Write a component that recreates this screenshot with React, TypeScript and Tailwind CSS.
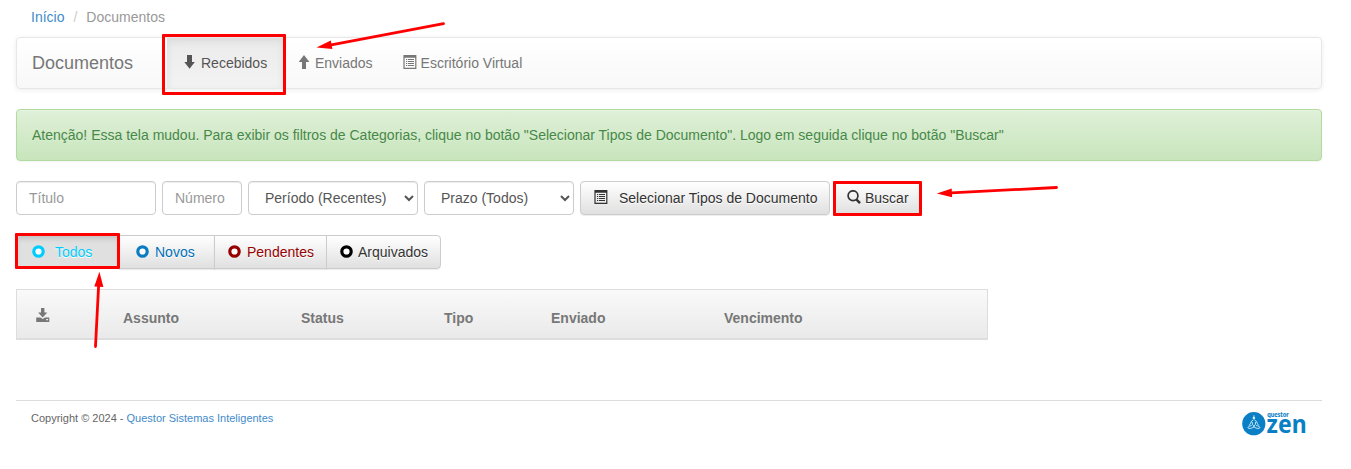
import React from "react";

type IconProps = { className?: string };

const ArrowDownIcon = ({ className = "" }: IconProps) => (
  <svg viewBox="0 0 14 14" width="14" height="14" fill="currentColor" className={`shrink-0 ${className}`}>
    <path d="M4 0h5v7h2.8L6.6 13.8 1.3 7H4z" />
  </svg>
);

const ArrowUpIcon = ({ className = "" }: IconProps) => (
  <svg viewBox="0 0 14 14" width="14" height="14" fill="currentColor" className={`shrink-0 ${className}`}>
    <path d="M5 13.9h4V7h3.4L7 0.1 1.7 7H5z" />
  </svg>
);

const ListIcon = ({ className = "" }: IconProps) => (
  <svg viewBox="0 0 14 14" width="14" height="14" fill="currentColor" className={`shrink-0 ${className}`}>
    <path fillRule="evenodd" d="M0.4 0h13v14h-13zM1.6 2.8v10h10.6v-10z" />
    <path d="M3 4h1.2v1H3zM5 4h6v1H5zM3 6h1.2v1H3zM5 6h6v1H5zM3 8h1.2v1H3zM5 8h6v1H5zM3 10h1.2v1H3zM5 10h6v1H5z" />
  </svg>
);

const SearchIcon = ({ className = "" }: IconProps) => (
  <svg viewBox="0 0 14 14" width="14" height="14" fill="none" stroke="currentColor" className={`shrink-0 ${className}`}>
    <circle cx="6" cy="5.7" r="4.9" strokeWidth="1.7" />
    <path d="M9.3 9.3l3.7 3.9" strokeWidth="2.4" />
  </svg>
);

const SaveIcon = ({ className = "" }: IconProps) => (
  <svg viewBox="0 0 14 14" width="14" height="14" fill="currentColor" className={`shrink-0 ${className}`}>
    <path d="M5 0h3.4v4.6h2.9L6.7 9.4 2.1 4.6H5z" />
    <path fillRule="evenodd" d="M0.2 9.6h4.2l2.3 1.5L9 9.6h4.3V14H0.2zM10.2 11v1.3h1.9V11z" />
  </svg>
);

const Ring = ({ className = "" }: IconProps) => (
  <svg viewBox="0 0 13 13" width="13" height="13" fill="#fff" stroke="currentColor" strokeWidth="3.2" className={`shrink-0 ${className}`}>
    <circle cx="6.5" cy="6.5" r="4.7" />
  </svg>
);

const Highlight = ({ className }: { className: string }) => (
  <span className={`pointer-events-none absolute z-10 rounded-[1px] border-3 border-[#ff0000] ${className}`} />
);

const ZenLogo = () => (
  <svg width="66" height="28" viewBox="0 0 66 28" className="block overflow-visible" aria-label="Questor Zen">
    <circle cx="11.8" cy="13.7" r="11.6" fill="#0b7fc5" />
    <g fill="#d7effb">
      <circle cx="11.9" cy="8" r="1.3" />
      <path d="M11.5 5.2h.8v2h-.8z" />
    </g>
    <g fill="none" stroke="#d7effb" strokeWidth="0.9" strokeLinecap="round" strokeLinejoin="round">
      <path d="M11 10c-1.9.5-2 3.2-3.5 5M12.8 10c1.9.5 2 3.2 3.5 5M10.2 12.4l.3 2.3 1.4 1.3 1.4-1.3.3-2.3" />
      <path d="M9.3 15.6c-3 .4-4.3 1.9-2.7 2.7 1.8.7 4.2-.6 5.7-1.6M14.5 15.6c3 .4 4.3 1.9 2.7 2.7-1.8.7-4.2-.6-5.7-1.6" />
    </g>
    <text x="25.2" y="7.3" textLength="21.5" lengthAdjust="spacingAndGlyphs" fontFamily="Lato, sans-serif" fontWeight="800" fontSize="6.6" fill="#1585ca">questor</text>
    <text x="24.6" y="23.3" textLength="40" lengthAdjust="spacingAndGlyphs" fontFamily="'Noto Sans', sans-serif" fontWeight="700" fontSize="25.5" fill="#0b7fc5">zen</text>
  </svg>
);

const button =
  "flex h-[34px] items-center border border-[#ccc] bg-linear-to-b from-white to-[#e0e0e0] text-[#333] shadow-[inset_0_1px_0_rgba(255,255,255,.15),0_1px_1px_rgba(0,0,0,.075)] [text-shadow:0_1px_0_#fff]";
const field =
  "h-[34px] rounded border border-[#ccc] bg-white px-3 text-sm text-[#555] shadow-[inset_0_1px_1px_rgba(0,0,0,.075)] outline-none placeholder:text-[#999]";

export default function App() {
  return (
    <div className="relative h-[469px] overflow-hidden bg-white pl-4 font-['Liberation_Sans',Arial,sans-serif] text-sm leading-5 text-[#333]">
      <div className="w-[1306px]">
        <nav className="flex h-[37px] gap-[9px] pt-[7px] pl-[15px] text-[#999]">
          <a className="text-[#428bca]">Início</a>
          <span className="text-[#ccc]">/</span>
          <span>Documentos</span>
        </nav>

        <header className="flex h-[52px] rounded border border-[#e7e7e7] bg-linear-to-b from-white to-[#f8f8f8] text-[#777] shadow-[inset_0_1px_0_rgba(255,255,255,.15),0_1px_5px_rgba(0,0,0,.075)] [text-shadow:0_1px_0_rgba(255,255,255,.25)]">
          <span className="w-[150px] py-[15px] pl-[15px] text-lg leading-5">Documentos</span>
          <a className="relative flex w-[116px] gap-1 bg-linear-to-b from-[#ebebeb] to-[#f3f3f3] py-[15px] pl-4 text-[#555] shadow-[inset_0_3px_9px_rgba(0,0,0,.075)]">
            <ArrowDownIcon className="mt-[2px]" />
            Recebidos
            <Highlight className="-top-[4px] -left-[5px] h-[61px] w-[124px]" />
          </a>
          <a className="flex gap-1 px-[14px] py-[15px]">
            <ArrowUpIcon className="mt-[2px]" />
            Enviados
          </a>
          <a className="flex gap-1 px-4 py-[15px]">
            <ListIcon className="mt-[2px]" />
            Escritório Virtual
          </a>
        </header>

        <div className="mt-5 h-[52px] rounded border border-[#b2dba1] bg-linear-to-b from-[#dff0d8] to-[#c8e5bc] p-[15px] text-[#468847] shadow-[inset_0_1px_0_rgba(255,255,255,.25),0_1px_2px_rgba(0,0,0,.05)] [text-shadow:0_1px_0_rgba(255,255,255,.2)]">
          Atenção! Essa tela mudou. Para exibir os filtros de Categorias, clique no botão "Selecionar Tipos de Documento". Logo em seguida clique no botão "Buscar"
        </div>

        <form className="mt-5 flex gap-1.5">
          <input placeholder="Título" className={`${field} w-[140px]`} />
          <input placeholder="Número" className={`${field} w-20`} />
          <select className={`${field} w-[170px] pr-0.5`}>
            <option>Período (Recentes)</option>
          </select>
          <select className={`${field} w-[150px] pr-0.5`}>
            <option>Prazo (Todos)</option>
          </select>
          <button type="button" className={`${button} w-[250px] rounded pl-[13px]`}>
            <ListIcon className="mr-[11px] -mt-[2px]" />
            Selecionar Tipos de Documento
          </button>
          <button type="button" className={`${button} relative -ml-0.5 w-[88px] rounded pl-3`}>
            <SearchIcon className="mr-1 -mt-[2px]" />
            Buscar
            <Highlight className="-top-px -left-[2px] h-[35px] w-[89px]" />
          </button>
        </form>

        <div className="mt-5 flex">
          <button type="button" className="relative flex h-[34px] w-[104px] items-center rounded-l border border-[#dbdbdb] bg-[#e0e0e0] pl-[15px] text-[#00cdff] shadow-[inset_0_3px_5px_rgba(0,0,0,.125)] [text-shadow:0_1px_0_#fff]">
            <Ring className="mr-[10px] -mt-px text-[#00cdff]" />
            Todos
            <Highlight className="-top-[3px] -left-[2px] h-[36px] w-[105px]" />
          </button>
          <button type="button" className={`${button} -ml-px w-24 pl-4`}>
            <Ring className="mr-[6px] -mt-px text-[#0b7cc1]" />
            <span className="text-[#0070b8]">Novos</span>
          </button>
          <button type="button" className={`${button} -ml-px w-[113px] pl-[13px]`}>
            <Ring className="mr-[6px] -mt-px text-[#960000]" />
            <span className="text-[#960000]">Pendentes</span>
          </button>
          <button type="button" className={`${button} -ml-px w-[115px] rounded-r pl-[13px]`}>
            <Ring className="mr-[5px] -mt-px text-black" />
            Arquivados
          </button>
        </div>

        <table className="mt-5 w-[972px] table-fixed border-separate border-spacing-0 text-left text-[#777]">
          <thead>
            <tr className="h-[51px] bg-linear-to-b from-[#fafafa] to-[#e9e9e9] [&>th]:border-t [&>th]:border-b-2 [&>th]:border-[#ddd] [&>th]:p-0 [&>th]:pt-2">
              <th className="w-[107px] border-l">
                <SaveIcon className="mt-[-6px] ml-[19px]" />
              </th>
              <th className="w-[178px]">Assunto</th>
              <th className="w-[143px]">Status</th>
              <th className="w-[107px]">Tipo</th>
              <th className="w-[173px]">Enviado</th>
              <th className="border-r">Vencimento</th>
            </tr>
          </thead>
        </table>

        <footer className="mt-[60px] flex justify-between border-t border-[#ddd] pt-[7px] pr-[14px] pl-[15px] text-[11px] leading-5 text-[#666]">
          <p>
            Copyright © 2024 - <a className="text-[#428bca]">Questor Sistemas Inteligentes</a>
          </p>
          <div className="pt-0.5">
            <ZenLogo />
          </div>
        </footer>
      </div>

      <svg className="pointer-events-none absolute inset-0 z-20" width="1351" height="469" fill="#ff0000" stroke="#ff0000">
        <g strokeWidth="2.8" strokeLinecap="round">
          <path d="M330 45.2L443.5 23.7" />
          <path d="M951 192.8L1056.5 187.5" />
          <path d="M98.6 286L95.5 346.5" />
        </g>
        <g stroke="none">
          <path d="M316.5 47.5L330.8 40.4 332.4 49z" />
          <path d="M936.8 193.5L951.7 188.4 952.1 197.3z" />
          <path d="M99.4 271.8L94.3 286.4 103.4 286.9z" />
        </g>
      </svg>
    </div>
  );
}
